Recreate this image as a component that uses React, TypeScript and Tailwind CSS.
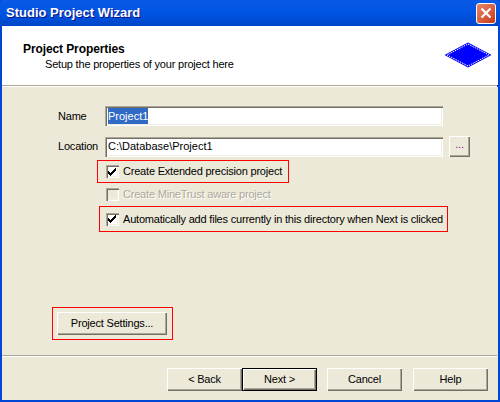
const sunken =
  'shadow-[inset_1px_1px_0_#aca899,inset_2px_2px_0_#716f64,inset_-1px_-1px_0_#ffffff,inset_-2px_-2px_0_#f1efe2]';
const raised =
  'shadow-[inset_1px_1px_0_#ffffff,inset_-1px_-1px_0_#716f64,inset_-2px_-2px_0_#aca899]';

function Separator() {
  return <div className="mr-px h-[2px] border-t border-[#aca899] bg-white" />;
}

function Check({ checked, disabled }: { checked?: boolean; disabled?: boolean }) {
  return (
    <span className={`flex h-[13px] w-[13px] shrink-0 items-center justify-center ${sunken} ${disabled ? 'bg-[#ece9d8]' : 'bg-white'}`}>
      {checked && (
        <svg width="8" height="8" viewBox="0 0 8 8" className="mr-px" shapeRendering="crispEdges">
          <path d="M7 0h1v3h-1v1h-1v1h-1v1h-1v1h-1v1h-1v-1h-1v-1h-1v-3h1v1h1v1h1v-1h1v-1h1v-1h1v-1h1z" fill="#000" />
        </svg>
      )}
    </span>
  );
}

function Button({ label, className, isDefault }: { label: string; className: string; isDefault?: boolean }) {
  return (
    <button
      className={`flex h-[23px] items-center justify-center bg-[#ece9d8] text-[11px] tracking-[-0.2px] text-black ${className} ${
        isDefault
          ? 'shadow-[inset_0_0_0_1px_#000000,inset_2px_2px_0_#ffffff,inset_-2px_-2px_0_#716f64,inset_-3px_-3px_0_#aca899]'
          : raised
      }`}
    >
      {label}
    </button>
  );
}

function Field({ label, value, selected }: { label: string; value: string; selected?: boolean }) {
  return (
    <div className="flex h-[20px] items-center">
      <span className="w-[47px] text-[11px] text-black">{label}</span>
      <div className={`flex h-[20px] w-[338px] items-center bg-white pl-[3px] text-[11px] tracking-normal text-black ${sunken}`}>
        {selected ? <span className="bg-[#316ac5] text-white">{value}</span> : value}
      </div>
    </div>
  );
}

export default function App() {
  return (
    <div
      className="flex h-[402px] w-[500px] flex-col overflow-hidden whitespace-nowrap bg-[#0046d5] pr-[2px] pb-[2px] pl-[2px] text-black"
      style={{ fontFamily: '"Liberation Sans", Arial, sans-serif' }}
    >
      {/* Title bar */}
      <div className="-mr-[2px] -ml-[2px] flex h-[26px] shrink-0 items-center justify-between rounded-t-[3px] bg-gradient-to-b from-[#0a5ae6] via-[#0054e3] to-[#0046c8] pr-[4px] pl-[6px]">
        <span className="text-[13px] font-bold text-white [text-shadow:1px_1px_0_#0f1089]">Studio Project Wizard</span>
        <div className="flex h-[21px] w-[20px] items-center justify-center rounded-[3px] border border-white bg-gradient-to-br from-[#e8866a] to-[#c8350f]">
          <svg width="12" height="12" viewBox="0 0 12 12">
            <path d="M1.5 1.5l9 9M10.5 1.5l-9 9" stroke="#fff" strokeWidth="2.2" />
          </svg>
        </div>
      </div>

      {/* Header */}
      <div className="flex h-[59px] shrink-0 items-start justify-between bg-white pt-[16px] pr-[6px] pl-[21px]">
        <div>
          <div className="text-[12px] leading-[14px] font-bold tracking-[-0.1px]">Project Properties</div>
          <div className="pl-[22px] text-[11px] leading-[16px] tracking-[-0.2px]">Setup the properties of your project here</div>
        </div>
        <svg width="48" height="26" viewBox="0 0 48 26">
          <polygon points="24,0.5 47.5,13 24,25.5 0.5,13" fill="#0000ff" />
          <polygon points="24,2 45,13 24,24 3,13" fill="#0000ff" stroke="#ffffff" strokeWidth="1" strokeDasharray="1.5 1" />
        </svg>
      </div>
      <Separator />

      {/* Body */}
      <div className="flex flex-1 flex-col bg-[#ece9d8] pt-[19px] tracking-[-0.2px]">
        <div className="ml-[56px] flex flex-col gap-[10px]">
          <Field label="Name" value="Project1" selected />
          <div className="flex items-center">
            <Field label="Location" value="C:\Database\Project1" />
            <Button label="..." className="ml-[6px] !h-[21px] w-[21px] pb-[4px] !text-[#a000a0]" />
          </div>
        </div>

        <div className="mt-[3px] ml-[95px] flex h-[23px] w-[192px] items-center gap-[4px] border border-[#ff0000] pl-[8px] text-[11px]">
          <Check checked />
          <span>Create Extended precision project</span>
        </div>
        <div className="mt-[5px] ml-[104px] flex h-[13px] items-center gap-[4px] text-[11px] text-[#aca899] [text-shadow:1px_1px_0_#ffffff]">
          <Check disabled />
          <span>Create MineTrust aware project</span>
        </div>
        <div className="mt-[5px] ml-[97px] flex h-[26px] w-[349px] items-center gap-[4px] border border-[#ff0000] pl-[6px] text-[11px]">
          <Check checked />
          <span>Automatically add files currently in this directory when Next is clicked</span>
        </div>

        <div className="mt-[75px] ml-[50px] flex h-[33px] w-[121px] items-center border border-[#ff0000] pl-[4px]">
          <Button label="Project Settings..." className="w-[110px]" />
        </div>

        <div className="mt-[15px]">
          <Separator />
        </div>

        <div className="mt-[11px] flex pl-[165px]">
          <Button label="< Back" className="w-[75px]" />
          <Button label="Next >" className="w-[75px]" isDefault />
          <Button label="Cancel" className="ml-[10px] w-[75px]" />
          <Button label="Help" className="ml-[11px] w-[75px]" />
        </div>
      </div>
    </div>
  );
}
